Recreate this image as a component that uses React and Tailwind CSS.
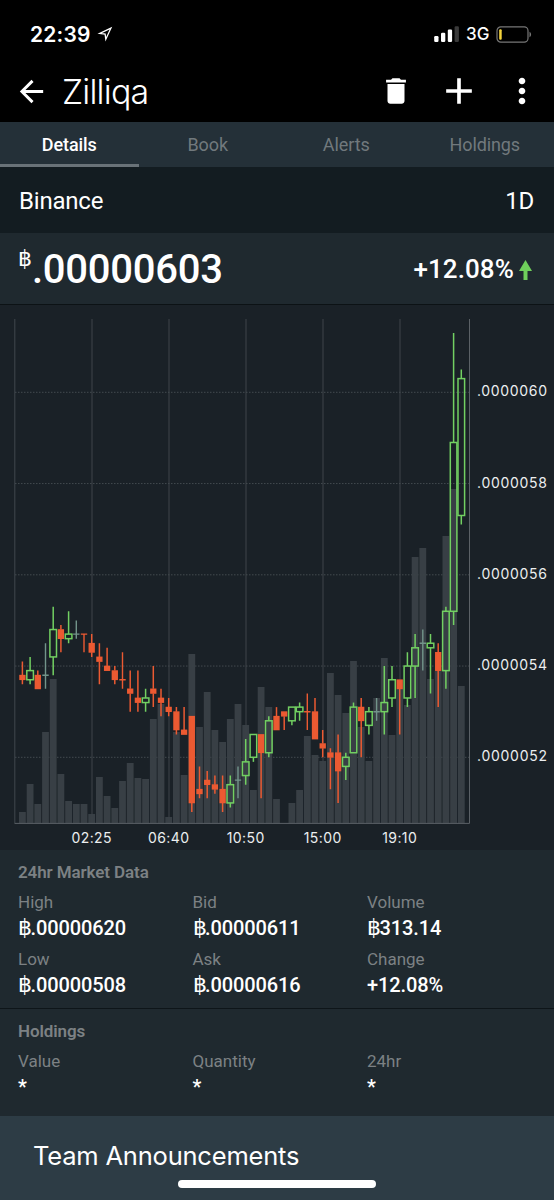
import React, { useState } from "react";
import { MdAdd, MdArrowBack, MdDelete, MdMoreVert } from "react-icons/md";

const TABS = ["Details", "Book", "Alerts", "Holdings"];

// [high, low, top of body, bottom of body, direction, volume height]
const CANDLES = [
  [541, 536, 538, 537, "down", 11],
  [542, 536, 539, 537, "up", 39],
  [539, 535, 538, 535, "down", 19],
  [545, 535, 538, 538, "flat", 91],
  [553, 538, 548, 542, "up", 144],
  [549, 543, 548, 546, "down", 49],
  [552, 545, 547, 546, "up", 22],
  [550, 546, 547, 547, "flat", 19],
  [547, 543, 547, 547, "down", 19],
  [547, 542, 545, 543, "down", 9],
  [545, 536, 542, 541, "down", 46],
  [544, 539, 540, 539, "down", 27],
  [540, 536, 539, 537, "down", 15],
  [543, 535, 537, 537, "down", 42],
  [539, 530, 535, 534, "down", 60],
  [539, 530, 533, 532, "down", 45],
  [535, 530, 533, 532, "up", 44],
  [540, 531, 535, 534, "down", 104],
  [535, 529, 533, 532, "down", 119],
  [533, 529, 531, 530, "down", 6],
  [531, 525, 530, 526, "down", 91],
  [531, 525, 526, 525, "down", 48],
  [529, 508, 529, 510, "down", 169],
  [518, 511, 513, 512, "down", 96],
  [517, 511, 515, 514, "down", 131],
  [516, 512, 514, 513, "down", 93],
  [516, 508, 513, 510, "down", 81],
  [516, 509, 514, 510, "up", 104],
  [518, 511, 515, 515, "flat", 119],
  [524, 514, 519, 516, "up", 98],
  [525, 519, 525, 520, "up", 33],
  [525, 511, 525, 521, "down", 136],
  [529, 520, 528, 521, "up", 116],
  [531, 526, 529, 526, "down", 24],
  [530, 526, 530, 529, "down", 0],
  [531, 527, 531, 528, "up", 20],
  [532, 528, 531, 530, "up", 33],
  [534, 526, 530, 530, "down", 87],
  [533, 524, 530, 524, "down", 68],
  [526, 520, 523, 522, "down", 62],
  [522, 513, 521, 520, "down", 150],
  [525, 510, 521, 517, "down", 128],
  [521, 515, 520, 518, "up", 110],
  [532, 521, 531, 521, "up", 162],
  [533, 520, 531, 528, "down", 96],
  [531, 525, 530, 527, "up", 62],
  [533, 528, 530, 530, "flat", 125],
  [540, 525, 532, 530, "up", 165],
  [540, 531, 537, 533, "up", 88],
  [537, 525, 537, 535, "down", 134],
  [543, 531, 540, 533, "up", 118],
  [547, 533, 544, 540, "up", 266],
  [548, 539, 545, 545, "flat", 275],
  [547, 534, 545, 544, "up", 144],
  [545, 531, 543, 539, "down", 152],
  [553, 535, 552, 539, "up", 287],
  [613, 549, 589, 552, "up", 334],
  [605, 571, 603, 573, "up", 137],
];

const COLORS = { up: "#72d062", down: "#ec5a32", flat: "#72948a" };

const PRICES = [600, 580, 560, 540, 520];
const TIMES = ["02:25", "06:40", "10:50", "15:00", "19:10"];

const TOP = 14;
const BOTTOM = 518;

const candleX = (i) => 22.4 + i * 7.7;
const priceY = (p) => 87.3 + (600 - p) * 4.5625;

const MARKET = [
  ["High", "฿.00000620"],
  ["Bid", "฿.00000611"],
  ["Volume", "฿313.14"],
  ["Low", "฿.00000508"],
  ["Ask", "฿.00000616"],
  ["Change", "+12.08%"],
];

const HOLDINGS = [
  ["Value", "*"],
  ["Quantity", "*"],
  ["24hr", "*"],
];

const StatusBar = () => (
  <div className="flex h-[60px] items-center justify-between pl-[30px] pr-[22px] pt-[8px] font-[Inter,sans-serif]">
    <div className="flex items-center gap-[6px]">
      <span className="text-[21px] font-semibold leading-none tracking-[0.2px]">22:39</span>
      <svg width="16" height="16" viewBox="0 0 16 16" fill="none">
        <path d="M13.9 2.2L2.8 7.3L8.1 8L8.8 13.2Z" stroke="#fff" strokeWidth="1.3" />
      </svg>
    </div>
    <div className="flex items-center">
      <svg width="26" height="16" viewBox="0 0 26 16" fill="#fff">
        <rect x="0.2" y="10" width="4.3" height="6" rx="1.2" />
        <rect x="7" y="6.7" width="4.3" height="9.3" rx="1.2" />
        <rect x="13.8" y="3.5" width="4.3" height="12.5" rx="1.2" />
        <rect x="20.6" y="0.3" width="4.3" height="15.7" rx="1.2" fill="#3a3a3a" />
      </svg>
      <span className="ml-[6px] w-[25px] text-[17px] font-medium leading-none">3G</span>
      <svg className="ml-[5px]" width="36" height="17" viewBox="0 0 36 17" fill="none">
        <rect x="1" y="0.9" width="31" height="15.2" rx="3.8" stroke="#777" strokeWidth="1.2" />
        <rect x="3.2" y="3.2" width="2.5" height="10.5" rx="1" fill="#f5d43c" />
        <path d="M33.5 5.8C35.6 6.8 35.6 10.2 33.5 11.2Z" fill="#777" />
      </svg>
    </div>
  </div>
);

const Header = () => (
  <header className="flex h-[62px] items-center pl-[14px] pr-[12px]">
    <button>
      <MdArrowBack size={35} />
    </button>
    <h1 className="ml-[13px] flex-1 pt-px font-[Inter,sans-serif] text-[34px] font-light leading-none tracking-[-0.8px]">
      Zilliqa
    </h1>
    <button className="mr-[24px]">
      <MdDelete size={34} />
    </button>
    <button className="mr-[21px]">
      <MdAdd size={44} />
    </button>
    <button>
      <MdMoreVert size={40} />
    </button>
  </header>
);

const Candle = ({ data, x }) => {
  const [high, low, open, close, dir] = data;
  const color = COLORS[dir];
  const top = priceY(open);
  const bottom = priceY(close);

  if (open === close) {
    return (
      <g stroke={color} strokeWidth="1.4">
        <path d={`M${x} ${priceY(high)}V${priceY(low)}M${x - 3.2} ${top}H${x + 3.2}`} />
      </g>
    );
  }

  return (
    <g stroke={color} strokeWidth="1.5">
      <path d={`M${x} ${priceY(high)}V${top}M${x} ${bottom}V${priceY(low)}`} />
      <rect
        x={x - (dir === "up" ? 3.3 : 2.4)}
        y={dir === "up" ? top : top + 0.4}
        width={dir === "up" ? 6.6 : 4.8}
        height={dir === "up" ? bottom - top : bottom - top - 0.8}
        fill={dir === "up" ? "none" : color}
      />
    </g>
  );
};

const Chart = () => (
  <svg className="block h-[545px] w-full bg-[#1a2127] font-[Inter,sans-serif]" viewBox="0 0 554 545">
    {TIMES.map((t, i) => (
      <path key={t} d={`M${92 + i * 77} ${TOP}V${BOTTOM}`} stroke="#363d43" strokeWidth="1.3" />
    ))}
    {PRICES.map((p) => (
      <path key={p} d={`M15 ${priceY(p)}H469`} stroke="#434a4f" strokeDasharray="1.5 1.5" />
    ))}

    {CANDLES.map((c, i) => (
      <rect key={i} x={candleX(i) - 3.4} y={BOTTOM - c[5]} width="6.8" height={c[5]} fill="#3a4147" fillOpacity="0.95" />
    ))}

    <path d={`M14.8 ${TOP}V${BOTTOM}`} stroke="#41484e" />
    <path d={`M14.5 ${BOTTOM + 0.4}H469.5V${TOP}`} fill="none" stroke="#5b6166" />

    {CANDLES.map((c, i) => (
      <Candle key={i} data={c} x={candleX(i)} />
    ))}

    {PRICES.map((p) => (
      <text key={p} x="477" y={priceY(p) + 4} fill="#eceeef" fontSize="14" textLength="70">
        {`.00000${p / 10}`}
      </text>
    ))}
    {TIMES.map((t, i) => (
      <text key={t} x={91.7 + i * 77} y="538" fill="#eceeef" fontSize="14" textAnchor="middle" letterSpacing="0.4">
        {t}
      </text>
    ))}
  </svg>
);

// the baht sign is drawn a bit larger and lighter than the digits
const Amount = ({ value }) =>
  value.startsWith("฿") ? (
    <>
      <span className="inline-block w-[12.5px] text-[22px] font-normal leading-none">฿</span>
      {value.slice(1)}
    </>
  ) : (
    value
  );

const Stats = ({ title, items, className }) => (
  <section className={`bg-[#1f292f] pl-[18px] ${className}`}>
    <h2 className="text-[17px] font-semibold leading-[20px] tracking-[-0.1px] text-[#7c8184]">{title}</h2>
    <div className="mt-[9px] grid grid-cols-[174.5px_174.5px_1fr] gap-y-[6px]">
      {items.map(([label, value]) => (
        <div key={label}>
          <div className="text-[17px] leading-[23px] text-[#7c8184]">{label}</div>
          <div className="h-[28px] text-[20px] font-medium leading-[28px] tracking-[-0.1px]">
            <Amount value={value} />
          </div>
        </div>
      ))}
    </div>
  </section>
);

const App = () => {
  const [tab, setTab] = useState("Details");

  return (
    <div className="flex h-[1200px] w-[554px] flex-col overflow-hidden bg-black font-[Roboto,sans-serif] text-white">
      <StatusBar />
      <Header />

      <nav className="grid h-[45px] grid-cols-4 bg-[#243038]">
        {TABS.map((name) => (
          <button
            key={name}
            onClick={() => setTab(name)}
            className={`border-b-[3px] pt-[2px] text-[18px] tracking-[-0.1px] ${
              tab === name ? "border-[#697278] font-medium text-white" : "border-transparent text-[#71797d]"
            }`}
          >
            {name}
          </button>
        ))}
      </nav>

      <div className="flex h-[66px] items-center justify-between bg-[#131c21] pl-[19px] pr-5 pt-px text-[24px] tracking-[-0.2px]">
        <span>Binance</span>
        <span>1D</span>
      </div>

      <div className="flex h-[72px] items-center justify-between border-b border-[#0c1215] bg-[#1f292f] pl-[18px] pr-[22px] pt-[2px]">
        <div className="flex items-start font-medium">
          <span className="w-[14px] text-[22px] font-normal leading-[24px]">฿</span>
          <span className="text-[40px] leading-[46px] tracking-[-0.25px]">.00000603</span>
        </div>
        <div className="flex items-center gap-[5px] text-[26px] font-medium tracking-[0.1px]">
          +12.08%
          <svg width="13" height="20" viewBox="0 0 13 20" fill="#6fcf5b">
            <path d="M6.5 0L13 11H8.5V20H4.5V11H0Z" />
          </svg>
        </div>
      </div>

      <Chart />

      <Stats title="24hr Market Data" items={MARKET} className="h-[159px] border-b border-[#0e1519] pt-[12px]" />
      <Stats title="Holdings" items={HOLDINGS} className="h-[107px] pt-[12px]" />

      <footer className="flex flex-1 flex-col bg-[#2d3c45] pt-[24px]">
        <span className="pl-[33px] font-[Inter,sans-serif] text-[25.5px] leading-[32px] tracking-[-0.2px]">Team Announcements</span>
        <div className="mx-auto mt-[8px] h-[8px] w-[198px] rounded-full bg-white" />
      </footer>
    </div>
  );
};

export default App;
